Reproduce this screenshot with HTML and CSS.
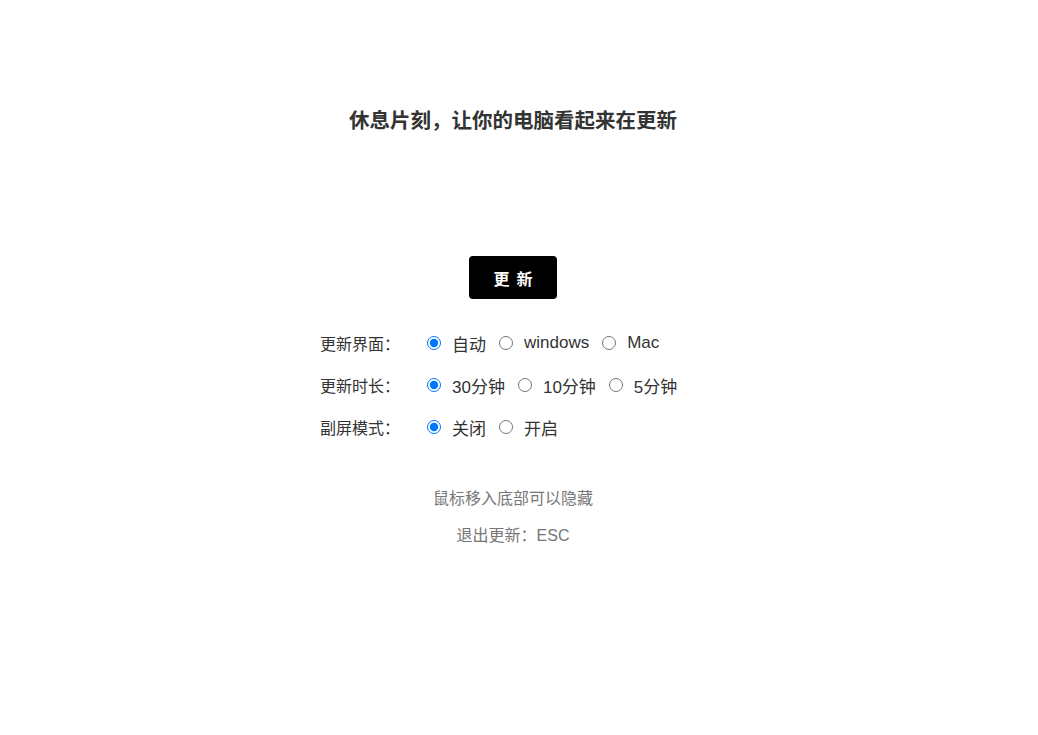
FILE: index.html
```html
<!DOCTYPE html>
<html lang="zh-CN">
<head>
<meta charset="utf-8">
<title>休息片刻</title>
<link rel="stylesheet" href="styles.css">
</head>
<body>
<main class="page">
  <h1 class="title">休息片刻，让你的电脑看起来在更新</h1>
  <div class="btn-wrap"><button class="btn">更新</button></div>
  <div class="options">
    <div class="row">
      <span class="label">更新界面：</span>
      <label class="opt"><input type="radio" name="ui" checked><span>自动</span></label>
      <label class="opt"><input type="radio" name="ui"><span>windows</span></label>
      <label class="opt"><input type="radio" name="ui"><span>Mac</span></label>
    </div>
    <div class="row">
      <span class="label">更新时长：</span>
      <label class="opt"><input type="radio" name="dur" checked><span>30分钟</span></label>
      <label class="opt"><input type="radio" name="dur"><span>10分钟</span></label>
      <label class="opt"><input type="radio" name="dur"><span>5分钟</span></label>
    </div>
    <div class="row">
      <span class="label">副屏模式：</span>
      <label class="opt"><input type="radio" name="sub" checked><span>关闭</span></label>
      <label class="opt"><input type="radio" name="sub"><span>开启</span></label>
    </div>
  </div>
  <div class="tips">
    <p>鼠标移入底部可以隐藏</p>
    <p>退出更新：ESC</p>
  </div>
</main>
</body>
</html>
```
FILE: styles.css
```css
html, body {
  margin: 0;
  padding: 0;
  background: #fff;
}
body {
  font-family: "Liberation Sans", "Noto Sans CJK SC", sans-serif;
  color: #333;
}
.page {
  width: 1026px;
  padding-top: 104px;
}
.title {
  margin: 0;
  font-family: "Noto Sans CJK SC", sans-serif;
  font-size: 20.5px;
  line-height: 30px;
  font-weight: bold;
  text-align: center;
  color: #333;
}
.btn-wrap {
  display: flex;
  justify-content: center;
  margin-top: 122px;
}
.btn {
  width: 88px;
  height: 43px;
  background: #000;
  color: #fff;
  border: none;
  border-radius: 4px;
  font-family: inherit;
  font-size: 16px;
  font-weight: bold;
  letter-spacing: 7px;
  padding: 0 0 0 7px;
}
.options {
  width: 386px;
  margin: 23px auto 0;
}
.row {
  display: flex;
  align-items: center;
  height: 42px;
}
.label {
  width: 107px;
  flex: none;
  font-size: 16px;
}
.opt {
  display: flex;
  align-items: center;
  gap: 11px;
  margin-right: 13px;
  font-size: 17px;
}
.opt input {
  margin: 0;
  width: 14px;
  height: 14px;
}
.tips {
  margin-top: 32px;
  text-align: center;
  color: #777;
  font-size: 16px;
}
.tips p {
  margin: 0;
  line-height: 37px;
}
```
